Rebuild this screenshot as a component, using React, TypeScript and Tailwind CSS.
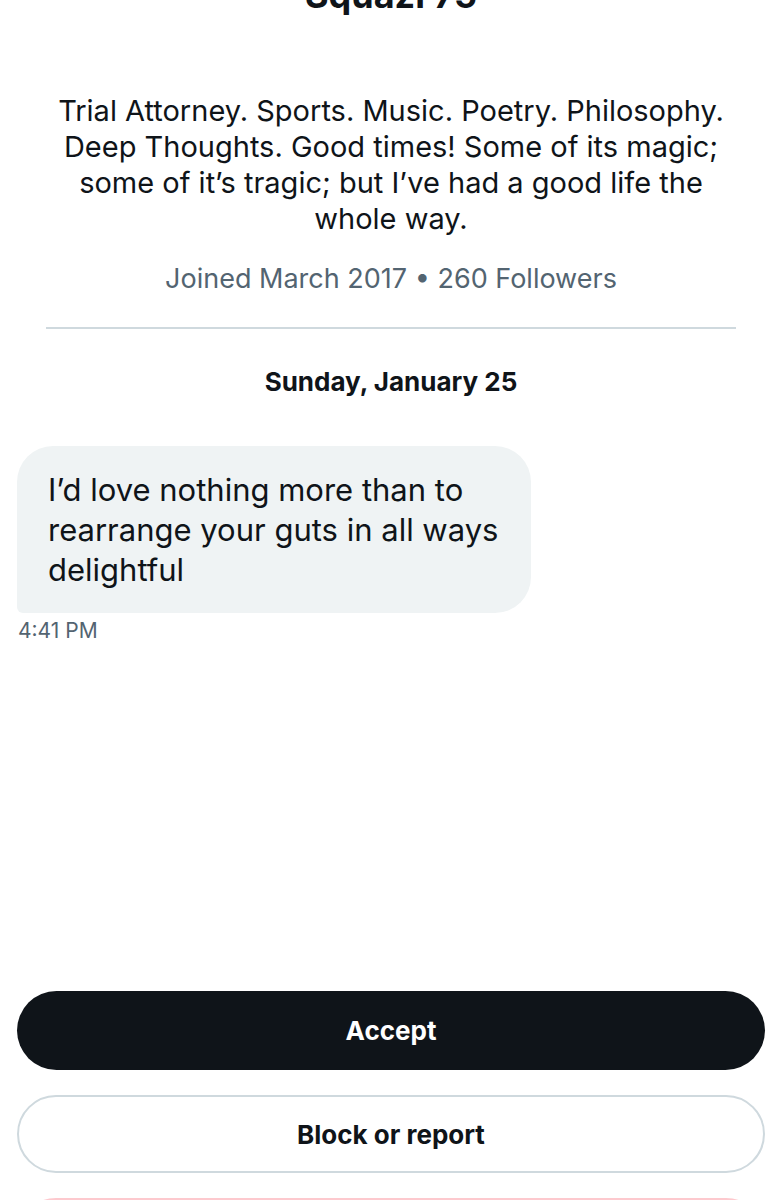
const App = () => {
  return (
    <div
      className="relative h-[1200px] w-[782px] overflow-hidden bg-white text-[#0f1419]"
      style={{ fontFamily: 'Inter, "Liberation Sans", sans-serif' }}
    >
      <div className="-mt-[25px] text-center text-[36px] font-bold leading-[40px]">Squazi 75</div>

      <p className="mx-auto mt-[78px] w-[680px] text-center text-[29px] leading-[36px]">
        Trial Attorney. Sports. Music. Poetry. Philosophy. Deep Thoughts. Good times! Some of its magic;
        some of it’s tragic; but I’ve had a good life the whole way.
      </p>

      <p className="mt-[25px] text-center text-[27px] leading-[34px] text-[#536471]">
        Joined March 2017 • 260 Followers
      </p>

      <div className="mx-[46px] mt-[31px] border-t-2 border-[#cfd9de]" />

      <p className="mt-[37px] text-center text-[26px] font-bold leading-[32px]">Sunday, January 25</p>

      <div className="ml-[17px] mt-[48px] w-[514px] rounded-[36px] rounded-bl-[6px] bg-[#eff3f4] px-[31px] pb-[23px] pt-[24px] text-[31px] leading-[40px]">
        I’d love nothing more than to rearrange your guts in all ways delightful
      </div>

      <p className="ml-[18px] mt-[4px] text-[21px] leading-[28px] text-[#536471]">4:41 PM</p>

      <div className="mx-[17px] mt-[346px] flex flex-col gap-[25px]">
        <button className="flex h-[79px] items-center justify-center rounded-full bg-[#0f1419] text-[26px] font-bold text-white">
          Accept
        </button>
        <button className="flex h-[78px] items-center justify-center rounded-full border-2 border-[#cfd9de] bg-white text-[26px] font-bold">
          Block or report
        </button>
        <button className="flex h-[78px] items-center justify-center rounded-full border-2 border-[#fdc9ce] bg-white text-[26px] font-bold text-[#f4212e]">
          Delete
        </button>
      </div>
    </div>
  )
}

export default App
